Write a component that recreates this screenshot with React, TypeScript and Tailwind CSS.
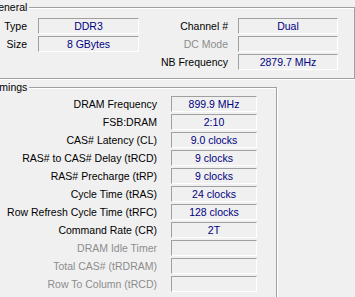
import React from 'react';

const font = { fontFamily: '"Liberation Sans", Arial, sans-serif' };

const timings = [
  { label: 'DRAM Frequency', value: '899.9 MHz' },
  { label: 'FSB:DRAM', value: '2:10' },
  { label: 'CAS# Latency (CL)', value: '9.0 clocks' },
  { label: 'RAS# to CAS# Delay (tRCD)', value: '9 clocks' },
  { label: 'RAS# Precharge (tRP)', value: '9 clocks' },
  { label: 'Cycle Time (tRAS)', value: '24 clocks' },
  { label: 'Row Refresh Cycle Time (tRFC)', value: '128 clocks' },
  { label: 'Command Rate (CR)', value: '2T' },
  { label: 'DRAM Idle Timer', value: '', disabled: true },
  { label: 'Total CAS# (tRDRAM)', value: '', disabled: true },
  { label: 'Row To Column (tRCD)', value: '', disabled: true }
];

const Field = ({ value, width }: { value: string; width: string }) => (
  <div
    className={`${width} h-[16px] border-t border-l border-t-[#a0a0a0] border-l-[#a0a0a0] border-b border-r border-b-white border-r-white flex items-center justify-center text-[#000080] leading-none`}
  >
    {value}
  </div>
);

const Label = ({ text, width, disabled }: { text: string; width: string; disabled?: boolean }) => (
  <div className={`${width} text-right whitespace-nowrap ${disabled ? 'text-[#8d8d8d]' : 'text-black'}`}>{text}</div>
);

export default function App() {
  return (
    <div className="w-[355px] h-[297px] overflow-hidden bg-[#f0f0f0] text-[10.5px] leading-[13px]" style={font}>
      <div className="ml-[-10px] pt-[7px] flex flex-col">
        {/* General */}
        <div className="relative w-[365px] h-[72px] border border-[#a0a0a0] shadow-[inset_1px_1px_0_#fff,1px_1px_0_#fff] pt-[10px] flex flex-col gap-[2px]">
          <span className="absolute top-[-7px] left-[-3px] px-[2px] bg-[#f0f0f0]">General</span>
          <div className="flex items-center">
            <Label text="Type" width="w-[36px]" />
            <div className="ml-[11px]"><Field value="DDR3" width="w-[101px]" /></div>
            <Label text="Channel #" width="w-[89px]" />
            <div className="ml-[10px]"><Field value="Dual" width="w-[100px]" /></div>
          </div>
          <div className="flex items-center">
            <Label text="Size" width="w-[36px]" />
            <div className="ml-[11px]"><Field value="8 GBytes" width="w-[101px]" /></div>
            <Label text="DC Mode" width="w-[89px]" disabled />
            <div className="ml-[10px]"><Field value="" width="w-[100px]" /></div>
          </div>
          <div className="flex items-center">
            <div className="w-[148px]" />
            <Label text="NB Frequency" width="w-[89px]" />
            <div className="ml-[10px]"><Field value="2879.7 MHz" width="w-[100px]" /></div>
          </div>
        </div>

        {/* Timings */}
        <div className="relative mt-[8px] w-[287px] h-[220px] border border-[#a0a0a0] shadow-[inset_1px_1px_0_#fff,1px_1px_0_#fff] pt-[8px] flex flex-col gap-[2px]">
          <span className="absolute top-[-7px] left-[-2px] px-[2px] bg-[#f0f0f0]">Timings</span>
          {timings.map((t, i) => (
            <div key={i} className="flex items-center">
              <Label text={t.label} width="w-[166px]" disabled={t.disabled} />
              <div className="ml-[14px]"><Field value={t.value} width="w-[86px]" /></div>
            </div>
          ))}
        </div>
      </div>
    </div>
  );
}
